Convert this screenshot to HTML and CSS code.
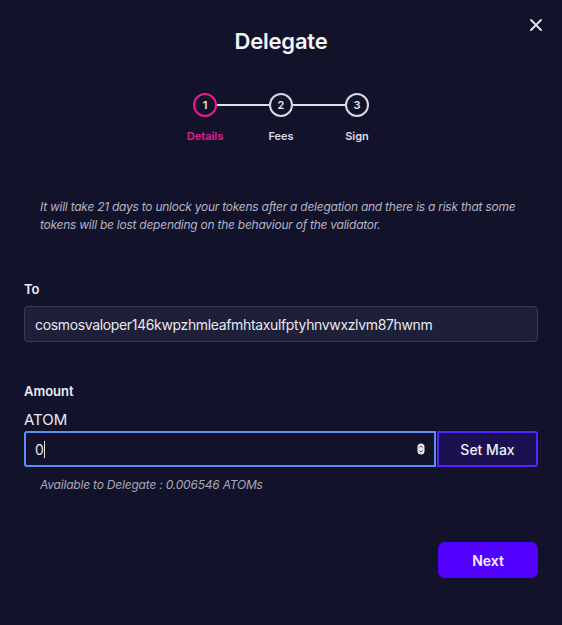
FILE: index.html
```html
<!DOCTYPE html>
<html>
<head>
<meta charset="utf-8">
<link rel="stylesheet" href="styles.css">
</head>
<body>
<div class="modal">
  <button class="close" aria-label="Close">
    <svg width="12" height="12" viewBox="0 0 12 12"><path d="M1 1L11 11M11 1L1 11" stroke="#e6e6ee" stroke-width="1.8" stroke-linecap="round"/></svg>
  </button>
  <h1 class="title">Delegate</h1>
  <div class="steps">
    <div class="step active"><div class="dot">1</div><div class="label">Details</div></div>
    <div class="line"></div>
    <div class="step"><div class="dot">2</div><div class="label">Fees</div></div>
    <div class="line"></div>
    <div class="step"><div class="dot">3</div><div class="label">Sign</div></div>
  </div>
  <p class="warning">It will take 21 days to unlock your tokens after a delegation and there is a risk that some tokens will be lost depending on the behaviour of the validator.</p>
  <div class="field to">
    <div class="field-label">To</div>
    <div class="input">cosmosvaloper146kwpzhmleafmhtaxulfptyhnvwxzlvm87hwnm</div>
  </div>
  <div class="field amount">
    <div class="field-label">Amount</div>
    <div class="denom">ATOM</div>
    <div class="amount-row">
      <div class="input focus"><span>0</span><span class="caret"></span>
        <svg class="spin" width="8" height="12" viewBox="0 0 8 12"><rect x="0.5" y="0.5" width="7" height="11" rx="3.5" fill="#e8e8ee"/><path d="M2.3 4.6L4 2.9L5.7 4.6M2.3 7.4L4 9.1L5.7 7.4" stroke="#333" stroke-width="0.9" fill="none"/></svg>
      </div>
      <button class="setmax">Set Max</button>
    </div>
    <div class="avail">Available to Delegate : 0.006546 ATOMs</div>
  </div>
  <div class="footer"><button class="next">Next</button></div>
</div>
</body>
</html>
```
FILE: styles.css
```css
* { box-sizing: border-box; }
html, body { margin: 0; padding: 0; }
body {
  background: #12132a;
  font-family: Inter, "Noto Sans", sans-serif;
  color: #e6e6ee;
  width: 562px;
  height: 625px;
  overflow: hidden;
}
.modal {
  position: relative;
  padding: 26px 24px 0 24px;
}
.close {
  position: absolute;
  top: 19px;
  right: 20px;
  background: none;
  border: 0;
  padding: 0;
  width: 12px;
  height: 12px;
  display: flex;
}
.title {
  margin: 0;
  text-align: center;
  font-size: 22px;
  font-weight: 600;
  color: #f4f4f8;
  line-height: 30px;
  letter-spacing: -0.2px;
}
.steps {
  display: flex;
  justify-content: center;
  align-items: flex-start;
  margin-top: 37px;
}
.step {
  display: flex;
  flex-direction: column;
  align-items: center;
  width: 24px;
  position: relative;
}
.dot {
  width: 24px;
  height: 24px;
  border-radius: 50%;
  border: 2px solid #d8d8e4;
  display: flex;
  align-items: center;
  justify-content: center;
  font-size: 11px;
  font-weight: 600;
  color: #e6e6ee;
}
.step.active .dot { border-color: #ec1a8f; }
.label {
  margin-top: 12px;
  font-size: 11px;
  font-weight: 600;
  color: #dcdce6;
  white-space: nowrap;
}
.step.active .label { color: #ec1a8f; }
.line {
  width: 52px;
  height: 2px;
  background: #e0e0ea;
  margin-top: 11px;
}
.warning {
  margin: 55px 0 0 16px;
  font-size: 12px;
  font-style: italic;
  line-height: 18px;
  color: #b4b4c4;
  letter-spacing: -0.25px;
}
.field-label {
  font-size: 13px;
  font-weight: 600;
  color: #ececf2;
  line-height: 18px;
}
.to { margin-top: 46px; }
.to .field-label { margin-bottom: 8px; }
.input {
  height: 36px;
  background: #1e1f38;
  border: 1px solid #3a3b55;
  border-radius: 4px;
  display: flex;
  align-items: center;
  padding: 0 10px;
  font-size: 14px;
  color: #e8e8f0;
  letter-spacing: -0.35px;
}
.amount { margin-top: 40px; }
.denom {
  margin-top: 10px;
  font-size: 15px;
  color: #ececf2;
  line-height: 20px;
}
.amount-row {
  display: flex;
  margin-top: 1px;
}
.input.focus {
  flex: 1;
  background: #12132a;
  border: 2px solid #5a8dfc;
  border-radius: 3px 0 0 3px;
  padding: 0 9px;
}
.caret {
  width: 1px;
  height: 17px;
  background: #e8e8f0;
  margin-left: 1px;
}
.spin { margin-left: auto; }
.setmax {
  width: 101px;
  height: 36px;
  background: #1b1150;
  border: 2px solid #5424ff;
  border-radius: 0 3px 3px 0;
  color: #f0f0f6;
  font-family: inherit;
  font-size: 14px;
  font-weight: 500;
  margin-left: 1px;
}
.avail {
  margin: 10px 0 0 16px;
  font-size: 12px;
  font-style: italic;
  color: #a8a8b8;
  line-height: 16px;
  letter-spacing: -0.2px;
}
.footer {
  display: flex;
  justify-content: flex-end;
  margin-top: 49px;
}
.next {
  width: 100px;
  height: 36px;
  background: #5200ff;
  border: 0;
  border-radius: 7px;
  color: #f4f0ff;
  font-family: inherit;
  font-size: 14px;
  font-weight: 600;
}
```
